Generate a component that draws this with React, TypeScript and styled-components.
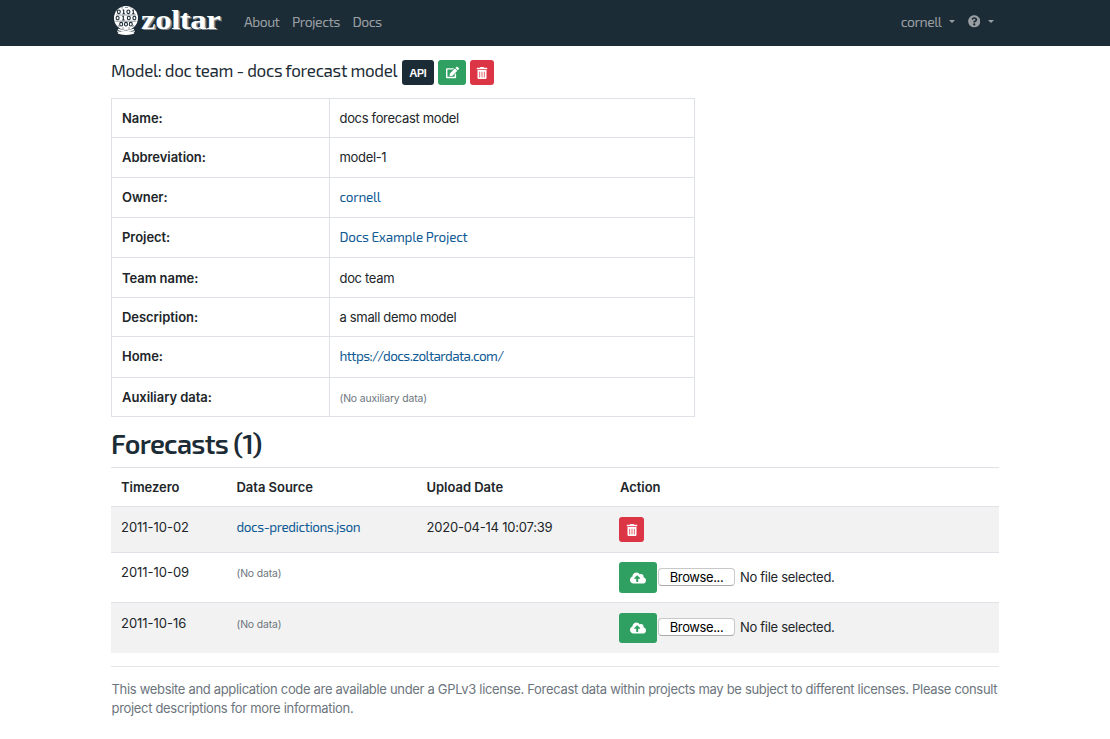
import React from "react";
import styled, { createGlobalStyle, css } from "styled-components";
import { FaCloudUploadAlt, FaEdit, FaQuestionCircle, FaTrashAlt } from "react-icons/fa";

const navy = "#1c2c36";
const ink = "#212529";
const line = "#dee2e6";
const green = "#2f9f62";
const red = "#dc3545";
const display = `"Exo 2", Roboto, sans-serif`;

const GlobalStyle = createGlobalStyle`
  *, *::before, *::after { box-sizing: border-box; }
  body {
    margin: 0;
    background: #fff;
    color: ${ink};
    font: 400 13px/19px Inter, sans-serif;
    letter-spacing: -0.33px;
  }
`;

const Navbar = styled.header`
  height: 46px;
  background: ${navy};
`;

const Container = styled.div`
  width: 888px;
  margin: 0 auto;
`;

const NavInner = styled(Container)`
  display: flex;
  align-items: center;
  height: 43px;
  font: 400 14px/20px ${display};
`;

const Brand = styled.a`
  display: flex;
  margin: 0 22px 0 2px;
`;

const NavLink = styled.a`
  display: flex;
  align-items: center;
  margin-right: 12.5px;
  color: #9a9fa3;
  letter-spacing: -0.5px;
`;

const NavRight = styled.div`
  display: flex;
  align-items: center;
  margin: 0 -7px 0 auto;
`;

const Caret = styled.i`
  margin-left: 7.5px;
  border: 3px solid transparent;
  border-top-color: currentColor;
  border-bottom: 0;
`;

const TitleRow = styled.div`
  display: flex;
  align-items: center;
  gap: 4px;
  height: 25px;
  margin: 14px 0 13px;
`;

const Title = styled.h1`
  width: 287px;
  margin: 0;
  padding-bottom: 4px;
  color: ${navy};
  font: 400 17px/21px ${display};
  letter-spacing: -0.35px;
  white-space: nowrap;
`;

const Button = styled.button<{ $color: string; $w: number; $h?: number }>`
  display: inline-flex;
  align-items: center;
  justify-content: center;
  flex: none;
  width: ${(p) => p.$w}px;
  height: ${(p) => p.$h ?? 25}px;
  padding: 0;
  border: 0;
  border-radius: 3px;
  background: ${(p) => p.$color};
  color: #fff;
  font: 600 12px/18px ${display};
`;

const ApiButton = styled(Button)`
  padding-bottom: 2px;
  letter-spacing: -0.4px;
`;

const Table = styled.table`
  border-collapse: separate;
  border-spacing: 0;
  table-layout: fixed;
`;

const DetailTable = styled(Table)`
  width: 584px;
  border: solid ${line};
  border-width: 1px 0 0 1px;
`;

const detailCell = css`
  border: solid ${line};
  border-width: 0 1px 1px 0;
  text-align: left;
  vertical-align: middle;
`;

const DetailRow = styled.tr<{ $h: number; $shift?: number }>`
  height: ${(p) => p.$h}px;

  & > * {
    padding: ${(p) => Math.max(0, p.$shift ?? 0)}px 10px ${(p) => Math.max(0, -(p.$shift ?? 0))}px;
  }

  & > td {
    padding-left: 9.5px;
  }
`;

const DetailHead = styled.th`
  ${detailCell}
  width: 218px;
  font-weight: 600;
  letter-spacing: -0.05px;
`;

const DetailCell = styled.td`
  ${detailCell}
`;

const Link = styled.a<{ $spacing?: number }>`
  color: #0f5a94;
  font: 400 13.5px/19px ${display};
  letter-spacing: ${(p) => p.$spacing ?? -0.22}px;
`;

const Small = styled.small<{ $drop?: number }>`
  display: block;
  padding-top: ${(p) => p.$drop ?? 0}px;
  color: #6c757d;
  font-size: 10.4px;
  letter-spacing: -0.13px;
`;

const SectionTitle = styled.h2`
  margin: 11px 0 9px;
  color: ${navy};
  font: 600 27px/30px ${display};
  letter-spacing: -0.7px;
`;

const ForecastTable = styled(Table)`
  width: 888px;
`;

const ForecastRow = styled.tr<{ $h: number; $striped?: boolean }>`
  height: ${(p) => p.$h}px;
  background: ${(p) => (p.$striped ? "#f2f2f2" : "#fff")};
`;

const forecastCell = css`
  padding: 10px 10px 0;
  border-top: 1px solid ${line};
  text-align: left;
  vertical-align: top;
`;

const ForecastHead = styled.th<{ $w?: number }>`
  ${forecastCell}
  width: ${(p) => (p.$w ? `${p.$w}px` : "auto")};
  font-weight: 600;
  letter-spacing: -0.03px;
`;

const ForecastCell = styled.td<{ $top?: number; $spacing?: number }>`
  ${forecastCell}
  padding-top: ${(p) => p.$top ?? 10}px;
  letter-spacing: ${(p) => p.$spacing ?? -0.03}px;
`;

const ActionCell = styled(ForecastCell)`
  padding-left: 9px;
  letter-spacing: -0.3px;
`;

const Upload = styled.div<{ $lift?: number }>`
  display: flex;
  align-items: center;

  & > span {
    display: flex;
    align-items: center;
    padding-bottom: ${(p) => p.$lift ?? 0}px;
  }
`;

const Browse = styled.button`
  width: 77px;
  height: 18px;
  margin: 0 5px 0 1px;
  padding: 0;
  border: 1px solid #c8c8c8;
  border-bottom-color: #a9a9a9;
  border-radius: 4px;
  background: #fff;
  color: #000;
  font: 400 13px/15px Inter, sans-serif;
  letter-spacing: -0.4px;
`;

const Footer = styled.footer`
  margin-top: 13px;
  padding: 13px 0 0 0.5px;
  border-top: 1px solid #e5e5e5;
  color: #6c757d;
  letter-spacing: -0.32px;
`;

const digits = [
  ["0", "1", "0", "1"],
  ["0", "1", "0", "0"],
  ["0", "0", "0"],
];

function Logo() {
  return (
    <svg width="109" height="31" viewBox="0 0 109 31">
      <circle cx="13" cy="12" r="12" fill="#fff" />
      <g fill="none" stroke={navy} strokeWidth="1.1">
        {digits.map((row, y) =>
          row.map((d, x) => {
            const cx = 13 + (x - (row.length - 1) / 2) * (y === 1 ? 5.6 : 4.8);
            const cy = 5.8 + y * 6.2;
            return d === "0" ? (
              <ellipse key={`${x}${y}`} cx={cx} cy={cy} rx="1.5" ry="1.8" />
            ) : (
              <path key={`${x}${y}`} d={`M${cx - 1} ${cy - 1.7}h1.1v3.5M${cx - 1} ${cy + 2}h2.4`} />
            );
          })
        )}
        <path
          d="M8 1.900h2M12 1.500h3M17 2h1.500M3 9h20M2.400 15.200h21M5 19l1.500 2M21 19l-1.500 2M9 22h2M15 22h2"
          strokeWidth=".5"
        />
      </g>
      <path d="M5.500 22.600c4.500 2.400 10.500 2.400 15 0l1.500 3c-4.500 2.400-13.500 2.400-18 0z" fill="#fff" />
      <path d="M4.500 24.400c5 2.300 12 2.300 17 0" fill="none" stroke={navy} strokeWidth=".9" />
      <ellipse cx="13" cy="27" rx="8.400" ry="1.900" fill="#fff" />
      <g fontFamily="'Liberation Serif', serif" fontWeight="700" fontSize="27">
        <text x="29.500" y="23.600" textLength="79.500" lengthAdjust="spacingAndGlyphs" fill="#7f898f">
          zoltar
        </text>
        <text x="28" y="23" textLength="79.500" lengthAdjust="spacingAndGlyphs" fill="#fff">
          zoltar
        </text>
      </g>
    </svg>
  );
}

interface Detail {
  label: string;
  h: number;
  shift?: number;
  value: React.ReactNode;
}

const details: Detail[] = [
  { label: "Name:", h: 39, value: "docs forecast model" },
  { label: "Abbreviation:", h: 40, value: "model-1" },
  { label: "Owner:", h: 40, value: <Link>cornell</Link> },
  { label: "Project:", h: 40, value: <Link>Docs Example Project</Link> },
  { label: "Team name:", h: 40, shift: 2, value: "doc team" },
  { label: "Description:", h: 39, value: "a small demo model" },
  { label: "Home:", h: 41, shift: -2, value: <Link $spacing={-0.57}>https://docs.zoltardata.com/</Link> },
  { label: "Auxiliary data:", h: 39, value: <Small $drop={2}>(No auxiliary data)</Small> },
];

function UploadForm({ h, lift }: { h: number; lift?: number }) {
  return (
    <Upload $lift={lift}>
      <Button $color={green} $w={38} $h={h}>
        <FaCloudUploadAlt size={16} />
      </Button>
      <span>
        <Browse>Browse...</Browse>
        No file selected.
      </span>
    </Upload>
  );
}

export default function App() {
  return (
    <>
      <GlobalStyle />
      <Navbar>
        <NavInner>
          <Brand>
            <Logo />
          </Brand>
          <NavLink>About</NavLink>
          <NavLink>Projects</NavLink>
          <NavLink>Docs</NavLink>
          <NavRight>
            <NavLink>
              cornell
              <Caret />
            </NavLink>
            <NavLink>
              <FaQuestionCircle size={12.5} />
              <Caret />
            </NavLink>
          </NavRight>
        </NavInner>
      </Navbar>
      <Container as="main">
        <TitleRow>
          <Title>Model: doc team - docs forecast model</Title>
          <ApiButton $color={navy} $w={32}>
            API
          </ApiButton>
          <Button $color={green} $w={28}>
            <FaEdit size={13} />
          </Button>
          <Button $color={red} $w={24}>
            <FaTrashAlt size={12} />
          </Button>
        </TitleRow>
        <DetailTable>
          <tbody>
            {details.map((d) => (
              <DetailRow key={d.label} $h={d.h} $shift={d.shift}>
                <DetailHead>{d.label}</DetailHead>
                <DetailCell>{d.value}</DetailCell>
              </DetailRow>
            ))}
          </tbody>
        </DetailTable>
        <SectionTitle>Forecasts (1)</SectionTitle>
        <ForecastTable>
          <thead>
            <ForecastRow $h={39}>
              <ForecastHead $w={115.5}>Timezero</ForecastHead>
              <ForecastHead $w={190}>Data Source</ForecastHead>
              <ForecastHead $w={193.5}>Upload Date</ForecastHead>
              <ForecastHead>Action</ForecastHead>
            </ForecastRow>
          </thead>
          <tbody>
            <ForecastRow $h={46} $striped>
              <ForecastCell $top={11}>2011-10-02</ForecastCell>
              <ForecastCell $top={11}>
                <Link $spacing={-0.43}>docs-predictions.json</Link>
              </ForecastCell>
              <ForecastCell $top={11} $spacing={-0.22}>
                2020-04-14 10:07:39
              </ForecastCell>
              <ActionCell>
                <Button $color={red} $w={25}>
                  <FaTrashAlt size={12} />
                </Button>
              </ActionCell>
            </ForecastRow>
            <ForecastRow $h={50}>
              <ForecastCell>2011-10-09</ForecastCell>
              <ForecastCell>
                <Small $drop={1}>(No data)</Small>
              </ForecastCell>
              <ForecastCell />
              <ActionCell $top={9}>
                <UploadForm h={31} lift={1} />
              </ActionCell>
            </ForecastRow>
            <ForecastRow $h={51} $striped>
              <ForecastCell $top={11}>2011-10-16</ForecastCell>
              <ForecastCell $top={11}>
                <Small $drop={1}>(No data)</Small>
              </ForecastCell>
              <ForecastCell />
              <ActionCell>
                <UploadForm h={30} lift={2} />
              </ActionCell>
            </ForecastRow>
          </tbody>
        </ForecastTable>
        <Footer>
          This website and application code are available under a GPLv3 license. Forecast data within projects may be
          subject to different licenses. Please consult project descriptions for more information.
        </Footer>
      </Container>
    </>
  );
}
